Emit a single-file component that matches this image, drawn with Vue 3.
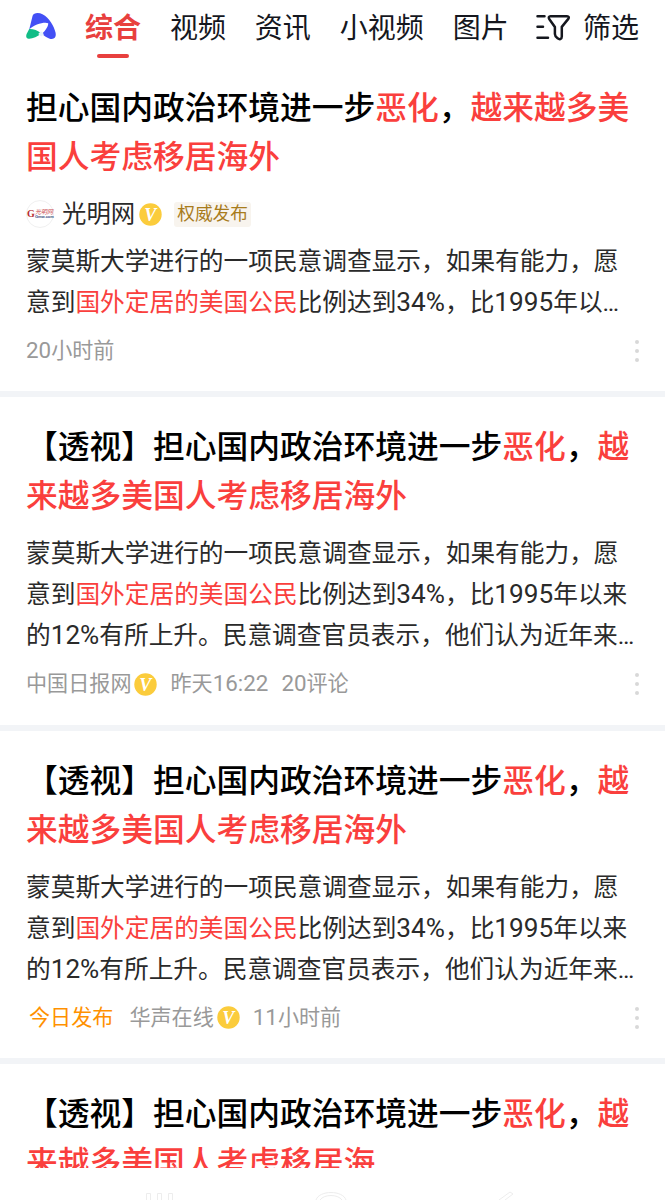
<script setup>
const tabs = ['综合', '视频', '资讯', '小视频', '图片']

// hl marks the highlighted keywords inside a line
const titleLines = [
  [{ text: '【透视】担心国内政治环境进一步' }, { text: '恶化', hl: true }, { text: '，' }, { text: '越', hl: true }],
  [{ text: '来越多美国人考虑移居海外', hl: true }],
]

const summaryLines = [
  [{ text: '蒙莫斯大学进行的一项民意调查显示，如果有能力，愿' }],
  [{ text: '意到' }, { text: '国外定居的美国公民', hl: true }, { text: '比例达到34%，比1995年以来' }],
  [{ text: '的12%有所上升。民意调查官员表示，他们认为近年来…' }],
]

const results = [
  {
    title: [
      [{ text: '担心国内政治环境进一步' }, { text: '恶化', hl: true }, { text: '，' }, { text: '越来越多美', hl: true }],
      [{ text: '国人考虑移居海外', hl: true }],
    ],
    source: '光明网',
    summary: [
      summaryLines[0],
      [{ text: '意到' }, { text: '国外定居的美国公民', hl: true }, { text: '比例达到34%，比1995年以…' }],
    ],
    meta: [{ text: '20小时前' }],
  },
  {
    title: titleLines,
    summary: summaryLines,
    meta: [{ text: '中国日报网', verified: true }, { text: '昨天16:22' }, { text: '20评论' }],
  },
  {
    title: titleLines,
    summary: summaryLines,
    meta: [{ text: '今日发布', fresh: true }, { text: '华声在线', verified: true }, { text: '11小时前' }],
  },
  {
    title: [titleLines[0], [{ text: '来越多美国人考虑移居海', hl: true }]],
    summary: [],
    meta: [],
  },
]

// digits are set slightly larger than the Chinese text
const split = (text) => text.split(/([\d:%]+)/).filter(Boolean)
const isNum = (s) => /^\d/.test(s)
</script>

<template>
  <div class="page">
    <header class="header">
      <svg class="logo" width="32" height="28" viewBox="0 0 32 28">
        <path d="M4.200 17.500 7.600 3.800C8.600.6 13.500.2 17.500 2.200 24.500 6 29 14 30.600 20.800c1 5.400-2.500 7.200-6.500 5.600-3-1.100-4.800-2.400-7.100-4.600C20.500 18.500 23.600 14 23.200 11.200 20 9.400 9 12.200 4.200 17.500Z" fill="#4350f5" />
        <path d="M4.200 17C8 16.800 12.500 18 16.400 21.600 12.500 24.800 7 27.200 3.500 26.800.8 26.400.8 23.500 2 21.300Z" fill="#12bd86" />
        <path d="M13.200 22 16 19.200l3 3.100-2.800 2.300Z" fill="#e6f3fb" />
      </svg>
      <nav class="tabs">
        <span v-for="(tab, i) in tabs" :key="tab" class="tab" :class="{ 'tab--active': i === 0 }">{{ tab }}</span>
      </nav>
      <div class="filter">
        <svg width="36" height="28" viewBox="0 0 36 28" fill="none" stroke="#15171e" stroke-width="2.500" stroke-linecap="round" stroke-linejoin="round">
          <path d="M2.500 3.200h7M2.500 13.700h5.500M2.500 24.700h10.500" />
          <path d="M15.500 3.200h16.500c1.800 0 2.300 1.500 1.300 2.700l-6.500 8v9.600c0 3-2.300 3.200-4.200 1.800-2-1.500-2.700-2.300-2.700-4.300v-7.100l-5.700-8c-.9-1.200-.3-2.700 1.300-2.700Z" />
        </svg>
        <span>筛选</span>
      </div>
    </header>

    <main class="results">
      <article v-for="(item, i) in results" :key="i" class="card">
        <h2 class="card__title">
          <span v-for="(line, l) in item.title" :key="l" class="line">
            <span v-for="(part, p) in line" :key="p" :class="{ hl: part.hl }">{{ part.text }}</span>
          </span>
        </h2>

        <div v-if="item.source" class="source">
          <span class="source__avatar"><i class="source__g">G</i><span class="source__mark"><b>光明网</b><small>Gmw.com</small></span></span>
          <span class="source__name">{{ item.source }}</span>
          <svg class="badge" width="23" height="23" viewBox="0 0 23 23">
            <circle cx="11.500" cy="11.500" r="11.200" />
            <text x="11.300" y="17.500" text-anchor="middle">V</text>
          </svg>
          <span class="source__tag">权威发布</span>
        </div>

        <p v-if="item.summary.length" class="card__summary">
          <span v-for="(line, l) in item.summary" :key="l" class="line">
            <span v-for="(part, p) in line" :key="p" :class="{ hl: part.hl }"><span v-for="(s, k) in split(part.text)" :key="k" :class="{ num: isNum(s) }">{{ s }}</span></span>
          </span>
        </p>

        <footer v-if="item.meta.length" class="meta">
          <span v-for="m in item.meta" :key="m.text" class="meta__item" :class="{ 'meta__item--fresh': m.fresh }">
            <span><span v-for="(s, k) in split(m.text)" :key="k" :class="{ num: isNum(s) }">{{ s }}</span></span>
            <svg v-if="m.verified" class="badge" width="23" height="23" viewBox="0 0 23 23">
              <circle cx="11.500" cy="11.500" r="11.200" />
              <text x="11.300" y="17.500" text-anchor="middle">V</text>
            </svg>
          </span>
          <span class="more"><i></i><i></i><i></i></span>
        </footer>
      </article>
    </main>

    <div class="navbar">
      <svg width="665" height="32" viewBox="0 0 665 32" fill="none" stroke="#ededed" stroke-width="1">
        <path d="M146.500 32v-6.500h4V32M157.500 32v-6.500h4V32M168.500 32v-6.500h4V32" />
        <path d="M316 32c3-10 27-10 30 0M320 32c4-6 18-6 22 0" />
        <path d="M499 32l11-8 3 2-8 6" />
      </svg>
    </div>
  </div>
</template>

<style>
body {
  margin: 0;
  background: #fff;
}
</style>

<style scoped>
.page {
  width: 665px;
  height: 1200px;
  overflow: hidden;
  background: #fff;
  font-family: Roboto, 'Noto Sans CJK SC', sans-serif;
  color: #2a2a2a;
  display: flex;
  flex-direction: column;
}

.header {
  display: flex;
  height: 64px;
  flex: none;
  box-sizing: border-box;
  padding: 8px 26px 0 25px;
  font-size: 28px;
  line-height: 42px;
  color: #15171e;
  white-space: nowrap;
}

.logo {
  margin-top: 4px;
}

.tabs {
  display: flex;
  gap: 28.900px;
  margin-left: 28px;
}

.tab {
  display: flex;
  flex-direction: column;
  align-items: center;
}

.tab--active {
  color: #e8403e;
  font-weight: 700;
}

.tab--active::after {
  content: '';
  width: 32px;
  height: 3.500px;
  margin-top: 4px;
  border-radius: 2px;
  background: #e8403e;
}

.filter {
  display: flex;
  margin-left: auto;
  gap: 12px;
}

.filter svg {
  margin-top: 5px;
}

.results {
  flex: none;
  height: 1104px;
  overflow: hidden;
}

.card {
  padding: 26px 18px 0 26px;
  height: 301.400px;
  border-bottom: 6px solid #f2f4f7;
}

.card:first-child {
  padding-top: 20px;
  height: 307.200px;
}

.line {
  display: block;
  white-space: nowrap;
}

.hl {
  color: #fa3f3d;
}

.num {
  font-size: 1.060em;
  line-height: 1;
}

.card__title {
  margin: 0;
  font-size: 31.750px;
  font-weight: 500;
  line-height: 49px;
  color: #000;
}

.source {
  display: flex;
  align-items: center;
  height: 30px;
  margin-top: 17px;
}

.source__avatar {
  width: 28px;
  height: 28px;
  box-sizing: border-box;
  border: 1px solid #f0f0f0;
  border-radius: 50%;
  display: flex;
  align-items: center;
  justify-content: center;
}

.source__g {
  font: 700 10px/10px 'Liberation Serif', serif;
  color: #b52b30;
}

.source__mark {
  display: flex;
  flex-direction: column;
  width: 18px;
}

.source__mark b {
  font: italic 400 6px/6px 'Noto Sans CJK SC', sans-serif;
  color: #c9474b;
}

.source__mark small {
  font: 700 4px/4px 'Liberation Sans', sans-serif;
  color: #344c7c;
}

.source__name {
  margin-left: 8px;
  font-size: 24.400px;
  line-height: 30px;
}

.badge {
  flex: none;
  margin-left: 3px;
}

.source .badge {
  margin-left: 4px;
}

.badge circle {
  fill: #fbcc3c;
}

.badge text {
  font: italic 700 18px 'Liberation Serif', serif;
  fill: #fff;
}

.source__tag {
  margin-left: 12px;
  padding: 0 3px;
  height: 25px;
  border-radius: 3px;
  background: #f8f4ee;
  color: #a87c1c;
  font-size: 17.700px;
  line-height: 25px;
}

.card__summary {
  margin: 12px 0 0;
  font-size: 24.700px;
  line-height: 41px;
}

.meta {
  display: flex;
  align-items: center;
  height: 28px;
  margin-top: 14px;
  gap: 13px;
  font-size: 21.100px;
  line-height: 28px;
  color: #999;
  white-space: nowrap;
}

.meta__item {
  display: flex;
  align-items: center;
}

.meta__item--fresh {
  padding: 0 3px;
  color: #ff9100;
}

.more {
  display: flex;
  flex-direction: column;
  gap: 5px;
  margin-left: auto;
  margin-right: 8px;
}

.more i {
  width: 4px;
  height: 4px;
  border-radius: 50%;
  background: #d8d8d8;
}

.navbar {
  height: 32px;
}

.navbar svg {
  display: block;
}
</style>
